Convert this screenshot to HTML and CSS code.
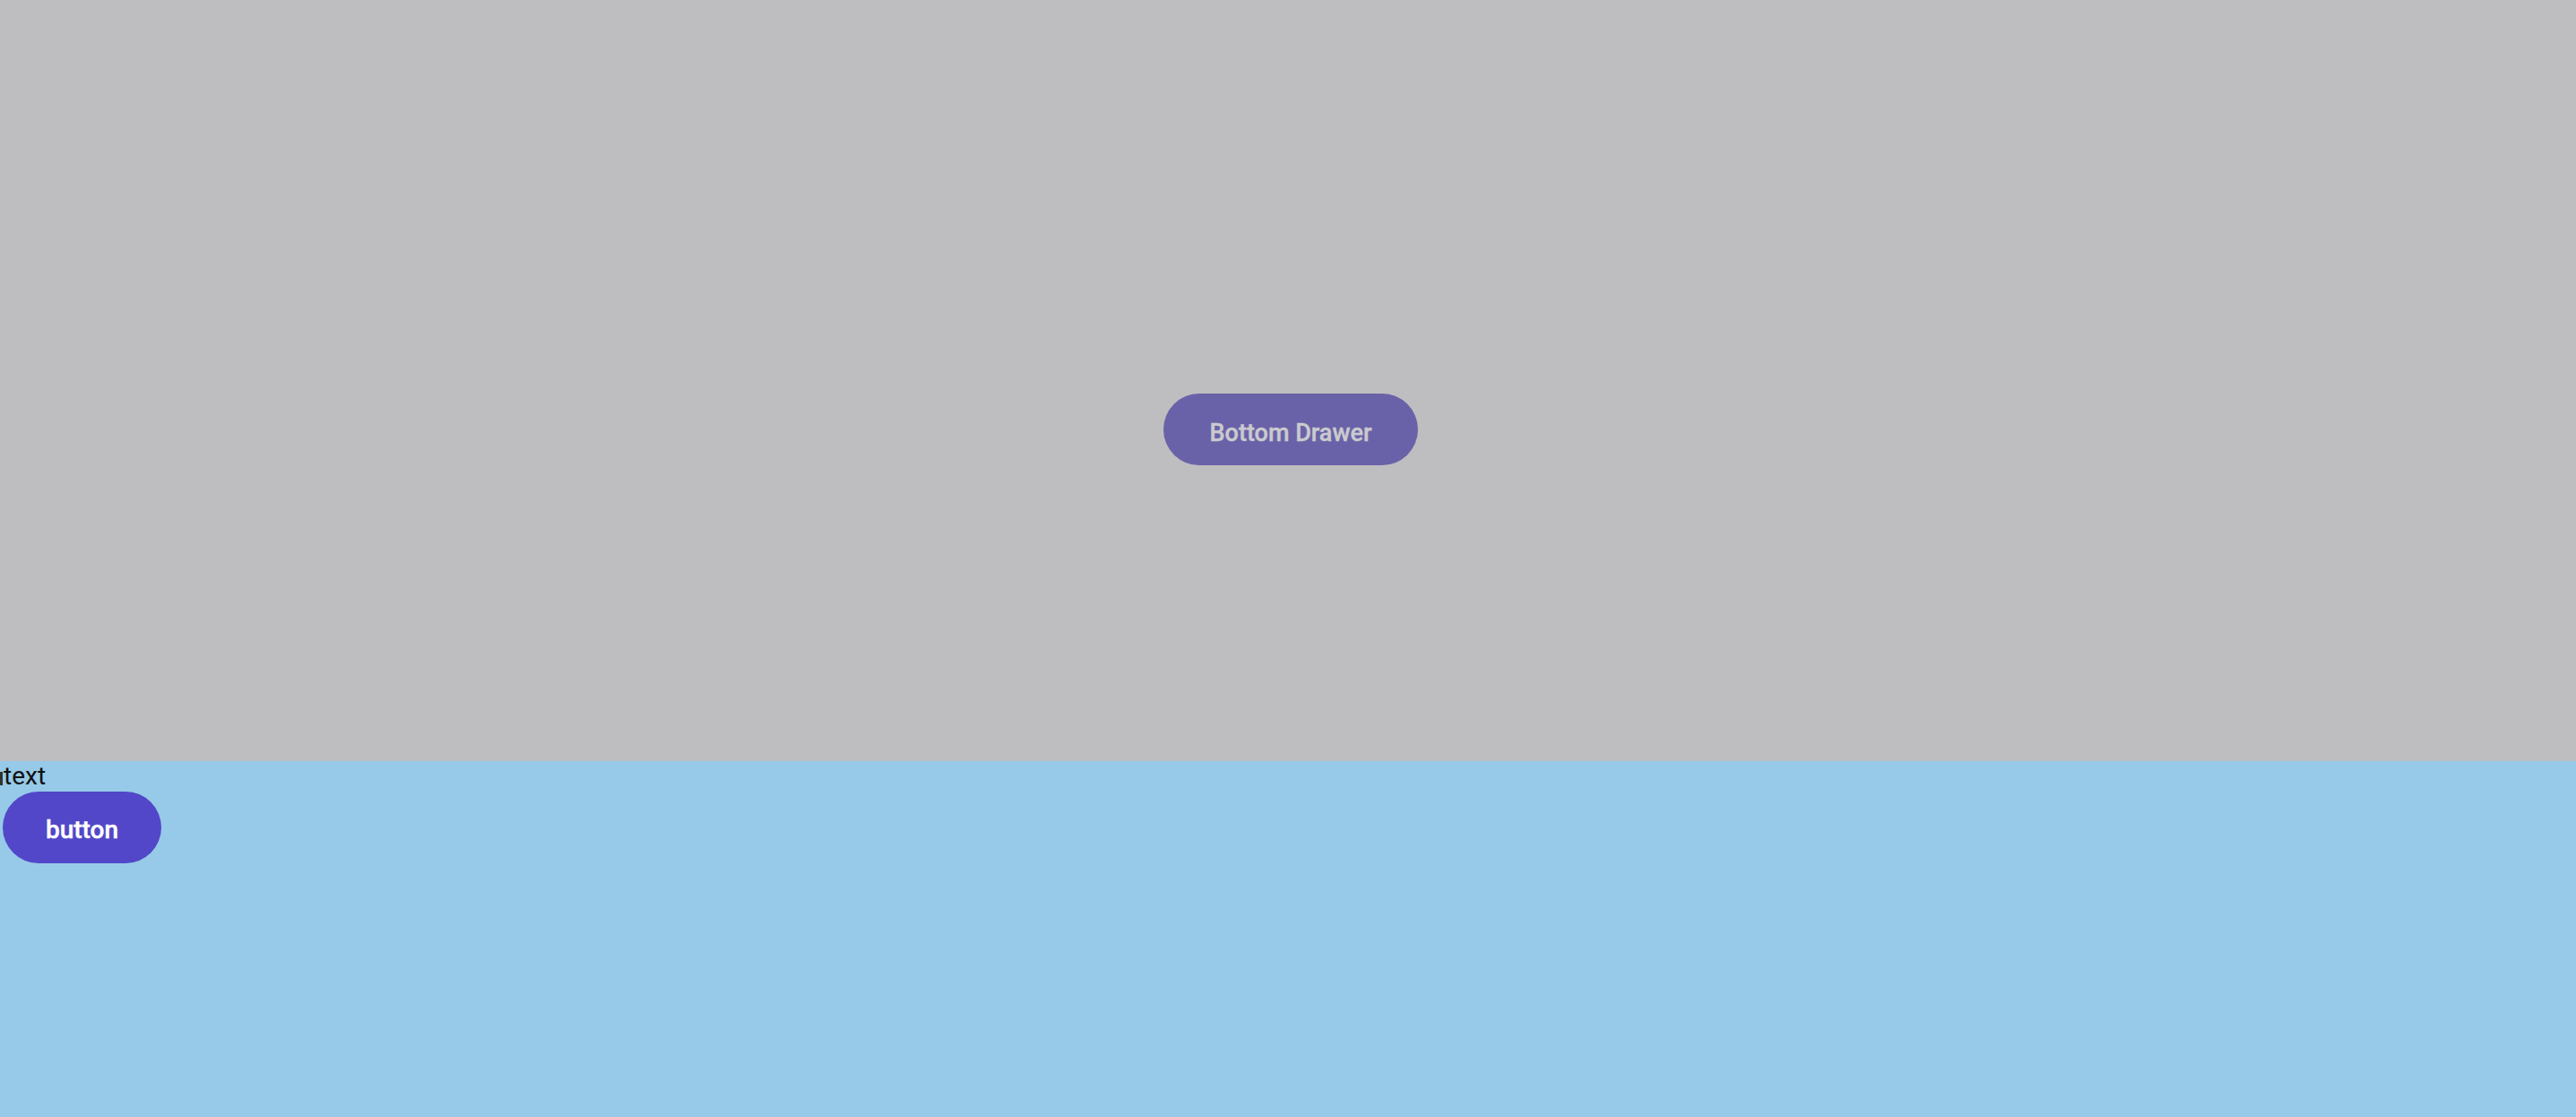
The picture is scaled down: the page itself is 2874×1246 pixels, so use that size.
FILE: index.html
```html
<!DOCTYPE html>
<html>
<head>
<meta charset="utf-8">
<link rel="stylesheet" href="styles.css">
</head>
<body>
<div class="page">
  <div class="backdrop">
    <button class="drawer-btn">Bottom Drawer</button>
  </div>
  <div class="sheet">
    <div class="sheet-text"><span class="caret"></span>text</div>
    <button class="sheet-btn">button</button>
  </div>
</div>
</body>
</html>
```
FILE: styles.css
```css
html, body {
  margin: 0;
  padding: 0;
  width: 2874px;
  height: 1246px;
  overflow: hidden;
  font-family: Roboto, "Liberation Sans", sans-serif;
}
.page {
  display: flex;
  flex-direction: column;
  height: 1246px;
}
.backdrop {
  height: 849px;
  background: #bebec0;
  display: flex;
  justify-content: center;
  align-items: flex-start;
  padding-top: 439px;
  box-sizing: border-box;
}
.drawer-btn {
  height: 80px;
  width: 284px;
  margin-left: 6px;
  border: none;
  border-radius: 40px;
  background: #6a62a8;
  color: #cacace;
  font-family: Roboto, "Liberation Sans", sans-serif;
  font-size: 27px;
  font-weight: 500;
  padding: 7px 0 0 0;
  -webkit-text-stroke: 0.4px #cacace;
}
.sheet {
  flex: 1;
  background: #96cae8;
  display: flex;
  flex-direction: column;
  align-items: flex-start;
}
.sheet-text {
  display: flex;
  align-items: center;
  font-size: 28px;
  line-height: 34px;
  color: #111;
}
.caret {
  width: 3px;
  height: 15px;
  background: #333;
  margin-right: 1px;
  margin-top: 4px;
}
.sheet-btn {
  margin-left: 3px;
  height: 80px;
  width: 177px;
  border: none;
  border-radius: 40px;
  background: #5247c8;
  color: #fff;
  font-family: Roboto, "Liberation Sans", sans-serif;
  font-size: 28px;
  font-weight: 500;
  padding: 5px 0 0 0;
  -webkit-text-stroke: 0.4px #fff;
}
```
